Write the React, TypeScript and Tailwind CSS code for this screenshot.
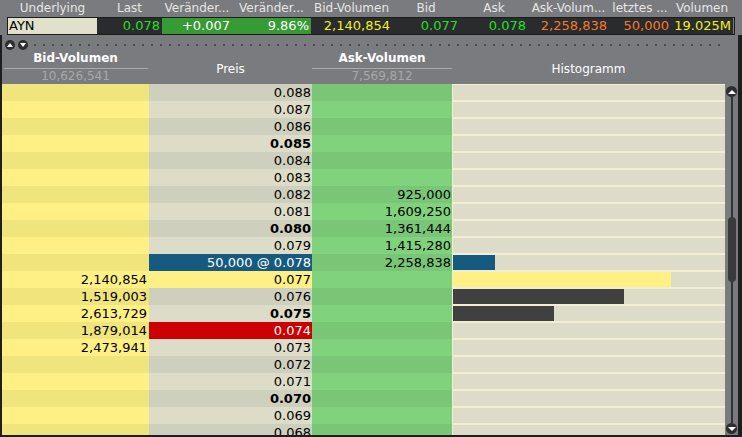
import React from "react";

type Row = {
  p: string;
  bold?: boolean;
  bid?: string;
  ask?: string;
  priceBg?: string;
  priceText?: string;
  priceLabel?: string;
  bar?: { w: number; c: string };
};

const rows: Row[] = [
  { p: "0.088" },
  { p: "0.087" },
  { p: "0.086" },
  { p: "0.085", bold: true },
  { p: "0.084" },
  { p: "0.083" },
  { p: "0.082", ask: "925,000" },
  { p: "0.081", ask: "1,609,250" },
  { p: "0.080", bold: true, ask: "1,361,444" },
  { p: "0.079", ask: "1,415,280" },
  {
    p: "0.078",
    ask: "2,258,838",
    priceBg: "bg-[#175a7f]",
    priceText: "text-white",
    priceLabel: "50,000 @ 0.078",
    bar: { w: 42, c: "bg-[#175a7f]" },
  },
  { p: "0.077", bid: "2,140,854", priceBg: "bg-[#fff085]", bar: { w: 218, c: "bg-[#fff085]" } },
  { p: "0.076", bid: "1,519,003", bar: { w: 171, c: "bg-[#404040]" } },
  { p: "0.075", bold: true, bid: "2,613,729", bar: { w: 101, c: "bg-[#404040]" } },
  { p: "0.074", bid: "1,879,014", priceBg: "bg-[#cc0000]", priceText: "text-white" },
  { p: "0.073", bid: "2,473,941" },
  { p: "0.072" },
  { p: "0.071" },
  { p: "0.070", bold: true },
  { p: "0.069" },
  { p: "0.068" },
];

const topCells = [
  { w: "w-[89px]", label: "Underlying", text: "AYN", bg: "bg-[#e1e1cb]", color: "text-black", left: true },
  { w: "w-[65px]", label: "Last", text: "0.078", bg: "bg-[#2a2b2d]", color: "text-[#22e022]" },
  { w: "w-[70px]", label: "Veränder...", text: "+0.007", bg: "bg-[#379a35]", color: "text-white" },
  { w: "w-[79px]", label: "Veränder...", text: "9.86%", bg: "bg-[#379a35]", color: "text-white" },
  { w: "w-[81px]", label: "Bid-Volumen", text: "2,140,854", bg: "bg-[#2a2b2d]", color: "text-[#f0f020]" },
  { w: "w-[68px]", label: "Bid", text: "0.077", bg: "bg-[#2a2b2d]", color: "text-[#22e022]" },
  { w: "w-[68px]", label: "Ask", text: "0.078", bg: "bg-[#2a2b2d]", color: "text-[#22e022]" },
  { w: "w-[81px]", label: "Ask-Volum...", text: "2,258,838", bg: "bg-[#2a2b2d]", color: "text-[#f47a2c]" },
  { w: "w-[62px]", label: "letztes ...", text: "50,000", bg: "bg-[#2a2b2d]", color: "text-[#f47a2c]" },
  { w: "w-[62px]", label: "Volumen", text: "19.025M", bg: "bg-[#2a2b2d]", color: "text-[#f0f020]" },
];

const dots = Array.from({ length: 77 });

export default function App() {
  return (
    <div className="w-[742px] h-[437px] overflow-hidden bg-[#7a7b7f] flex flex-col font-['DejaVu_Sans',sans-serif]">
      {/* labels */}
      <div className="h-[17px] flex pl-[8px] text-[12px] leading-[17px] text-[#e6e6e6]">
        {topCells.map((c, i) => (
          <div key={i} className={`${c.w} text-center whitespace-nowrap overflow-hidden`}>
            {c.label}
          </div>
        ))}
      </div>
      {/* data row */}
      <div className="h-[18px] ml-[7px] w-[728px] flex border border-[#1c1c1c] text-[13px] leading-[16px]">
        {topCells.map((c, i) => (
          <div
            key={i}
            className={`${c.w} ${c.bg} ${c.color} whitespace-nowrap overflow-hidden ${c.left ? "text-left pl-[1px]" : "text-right pr-[2px]"}`}
          >
            {c.text}
          </div>
        ))}
      </div>
      {/* lower panel */}
      <div className="flex-1 flex flex-col border-l-2 border-r-4 border-b-2 border-[#1e1e1e] min-h-0">
        {/* control row */}
        <div className="h-[15px] flex items-center pl-[3px] pt-[4px]">
          <div className="w-[10px] h-[10px] rounded-full bg-[#2e2e2e] flex items-center justify-center">
            <div className="w-0 h-0 border-l-[3px] border-r-[3px] border-b-[4px] border-l-transparent border-r-transparent border-b-white" />
          </div>
          <div className="w-[10px] h-[10px] rounded-full bg-[#2e2e2e] flex items-center justify-center ml-[3px]">
            <div className="w-0 h-0 border-l-[3px] border-r-[3px] border-t-[4px] border-l-transparent border-r-transparent border-t-white" />
          </div>
          <div className="flex gap-[7px] ml-[6px]">
            {dots.map((_, i) => (
              <div key={i} className="w-[2px] h-[2px] rounded-full bg-[#3c3c3c]" />
            ))}
          </div>
        </div>
        {/* column headers */}
        <div className="h-[34px] flex text-[12px] leading-[13px]">
          <div className="w-[147px] flex flex-col items-center pt-[2px]">
            <div className="font-bold text-white">Bid-Volumen</div>
            <div className="w-[144px] h-[1px] bg-[#a9a9a9] mt-[3px]" />
            <div className="text-[#a8a8a8] mt-[1px]">10,626,541</div>
          </div>
          <div className="w-[163px] flex items-center justify-center pt-[4px] text-white">Preis</div>
          <div className="w-[140px] flex flex-col items-center pt-[2px]">
            <div className="font-bold text-white">Ask-Volumen</div>
            <div className="w-[140px] h-[1px] bg-[#a9a9a9] mt-[3px]" />
            <div className="text-[#a8a8a8] mt-[1px]">7,569,812</div>
          </div>
          <div className="w-[273px] flex items-center justify-center pt-[4px] text-white">Histogramm</div>
        </div>
        {/* body */}
        <div className="flex-1 flex min-h-0 overflow-hidden">
          <div className="w-[723px] flex flex-col text-[13px] leading-[17px]">
            {rows.map((r, i) => {
              const dark = i % 2 === 0;
              return (
                <div key={i} className="h-[17px] flex shrink-0">
                  <div
                    className={`w-[147px] text-right pr-[2px] text-black ${dark ? "bg-[#f0e47c]" : "bg-[#fff085]"}`}
                  >
                    {r.bid ?? ""}
                  </div>
                  <div
                    className={`w-[163px] text-right pr-[1px] ${r.priceBg ?? (dark ? "bg-[#cfcfbe]" : "bg-[#dcdcc8]")} ${r.priceText ?? "text-black"} ${r.bold ? "font-bold" : ""}`}
                  >
                    {r.priceLabel ?? r.p}
                  </div>
                  <div
                    className={`w-[140px] text-right pr-[1px] text-black ${dark ? "bg-[#79c677]" : "bg-[#80d27d]"}`}
                  >
                    {r.ask ?? ""}
                  </div>
                  <div className="w-[273px] border-l border-[#f2eed2]">
                    <div className="h-[17px] bg-[#dcdcc8] border-t border-b border-[#f2eed2]">
                      {r.bar && (
                        <div className={`h-[15px] ${r.bar.c}`} style={{ width: r.bar.w }} />
                      )}
                    </div>
                  </div>
                </div>
              );
            })}
          </div>
          {/* scrollbar */}
          <div className="w-[13px] relative flex flex-col items-center">
            <div className="w-[11px] h-[11px] mt-[2px] rounded-full bg-[#2e2e2e] flex items-center justify-center">
              <div className="w-0 h-0 border-l-[4px] border-r-[4px] border-b-[4px] border-l-transparent border-r-transparent border-b-white" />
            </div>
            <div className="flex-1 w-[2px] bg-[#333335]" />
            <div className="w-[11px] h-[11px] mb-[1px] rounded-full bg-[#2e2e2e] flex items-center justify-center">
              <div className="w-0 h-0 border-l-[4px] border-r-[4px] border-t-[4px] border-l-transparent border-r-transparent border-t-white" />
            </div>
            <div className="absolute left-[3px] top-[133px] w-[8px] h-[65px] rounded-full bg-[#3a3a3c]" />
          </div>
        </div>
      </div>
    </div>
  );
}
